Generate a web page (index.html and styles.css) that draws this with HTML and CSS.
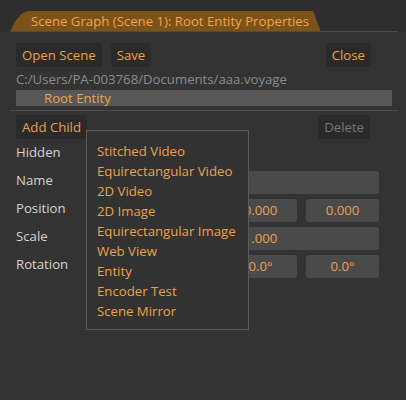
FILE: index.html
```html
<!DOCTYPE html>
<html>
<head>
<meta charset="utf-8">
<link rel="stylesheet" href="styles.css">
</head>
<body>
<div class="header">
  <div class="tab">Scene Graph (Scene 1): Root Entity Properties</div>
</div>
<div class="content">
  <div class="btnrow top">
    <span class="btn">Open Scene</span>
    <span class="btn save">Save</span>
    <span class="spacer"></span>
    <span class="btn close">Close</span>
  </div>
  <div class="path">C:/Users/PA-003768/Documents/aaa.voyage</div>
  <div class="rootbar"><span>Root Entity</span></div>
</div>
<div class="sep"></div>
<div class="content">
  <div class="btnrow second">
    <span class="btn">Add Child</span>
    <span class="spacer"></span>
    <span class="btn disabled">Delete</span>
  </div>
  <div class="props">
    <div class="row first"><span class="label">Hidden</span><span class="check"></span></div>
    <div class="row"><span class="label">Name</span><span class="field wide"></span></div>
    <div class="row"><span class="label">Position</span><span class="field">0.000</span><span class="field">0.000</span><span class="field">0.000</span></div>
    <div class="row"><span class="label">Scale</span><span class="field wide">1.000</span></div>
    <div class="row"><span class="label">Rotation</span><span class="field">0.0°</span><span class="field">0.0°</span><span class="field">0.0°</span></div>
  </div>
</div>
<div class="popup">
  <div class="item">Stitched Video</div>
  <div class="item">Equirectangular Video</div>
  <div class="item">2D Video</div>
  <div class="item">2D Image</div>
  <div class="item">Equirectangular Image</div>
  <div class="item">Web View</div>
  <div class="item">Entity</div>
  <div class="item">Encoder Test</div>
  <div class="item">Scene Mirror</div>
</div>
</body>
</html>
```
FILE: styles.css
```css
html, body {
  margin: 0;
  padding: 0;
  background: #333333;
  font-family: "Open Sans", "Noto Sans", sans-serif;
  font-size: 13.2px;
  color: #d2d2d2;
  width: 406px;
  height: 400px;
  overflow: hidden;
  position: relative;
}
.header {
  height: 32px;
  background: #2e2e2e;
  padding-left: 10px;
  display: flex;
  align-items: flex-end;
  box-sizing: border-box;
  position: relative;
}
.header::after {
  content: "";
  position: absolute;
  left: 10px;
  right: 8px;
  bottom: 0;
  height: 1px;
  background: #4c4c4c;
}
.tab {
  width: 311px;
  height: 21px;
  line-height: 20px;
  background: #7d5219;
  color: #f0a44e;
  clip-path: polygon(0 100%, 5px 50%, 11px 15%, 17px 0, 303px 0, 311px 100%);
  padding-left: 21px;
  box-sizing: border-box;
  white-space: nowrap;
}
.content {
  padding: 0 14px 0 16px;
}
.btnrow {
  display: flex;
  height: 24px;
}
.btnrow.top { margin-top: 11px; padding-right: 21px; }
.btnrow.second { margin-top: 4px; padding-right: 22px; }
.btn {
  background: #2a2a2a;
  color: #eca14c;
  border-radius: 3px;
  height: 24px;
  line-height: 24px;
  padding: 0 6px;
  white-space: nowrap;
}
.btn.save { margin-left: 9px; }
.btn.disabled { color: #767676; }
.spacer { flex: 1; }
.path {
  color: #8c8c8c;
  height: 21px;
  line-height: 21px;
  margin-top: 2px;
  white-space: nowrap;
}
.rootbar {
  background: #575757;
  height: 16px;
  line-height: 16px;
  color: #eca14c;
  padding-left: 28px;
}
.sep {
  height: 1px;
  background: #4c4c4c;
  margin: 4px 8px 0 10px;
}
.props {
  padding-right: 13px;
}
.row {
  display: flex;
  gap: 9px;
  height: 23px;
  margin-top: 5px;
  align-items: center;
}
.row.first { margin-top: 4px; }
.label {
  width: 117px;
  flex: none;
  color: #d4d4d4;
  position: relative;
  top: -3px;
}
.check {
  width: 23px;
  height: 23px;
  background: #4a4a4a;
  border-radius: 3px;
}
.field {
  flex: 1;
  height: 23px;
  line-height: 23px;
  background: #4a4a4a;
  border-radius: 3px;
  color: #eca14c;
  text-align: center;
}
.popup {
  position: absolute;
  left: 86px;
  top: 130px;
  width: 163px;
  height: 200px;
  box-sizing: border-box;
  border: 1px solid #5a5a5a;
  background: #323232;
  padding: 10px 0 0 10px;
}
.item {
  height: 20px;
  line-height: 20px;
  color: #eca14c;
  white-space: nowrap;
}
```
